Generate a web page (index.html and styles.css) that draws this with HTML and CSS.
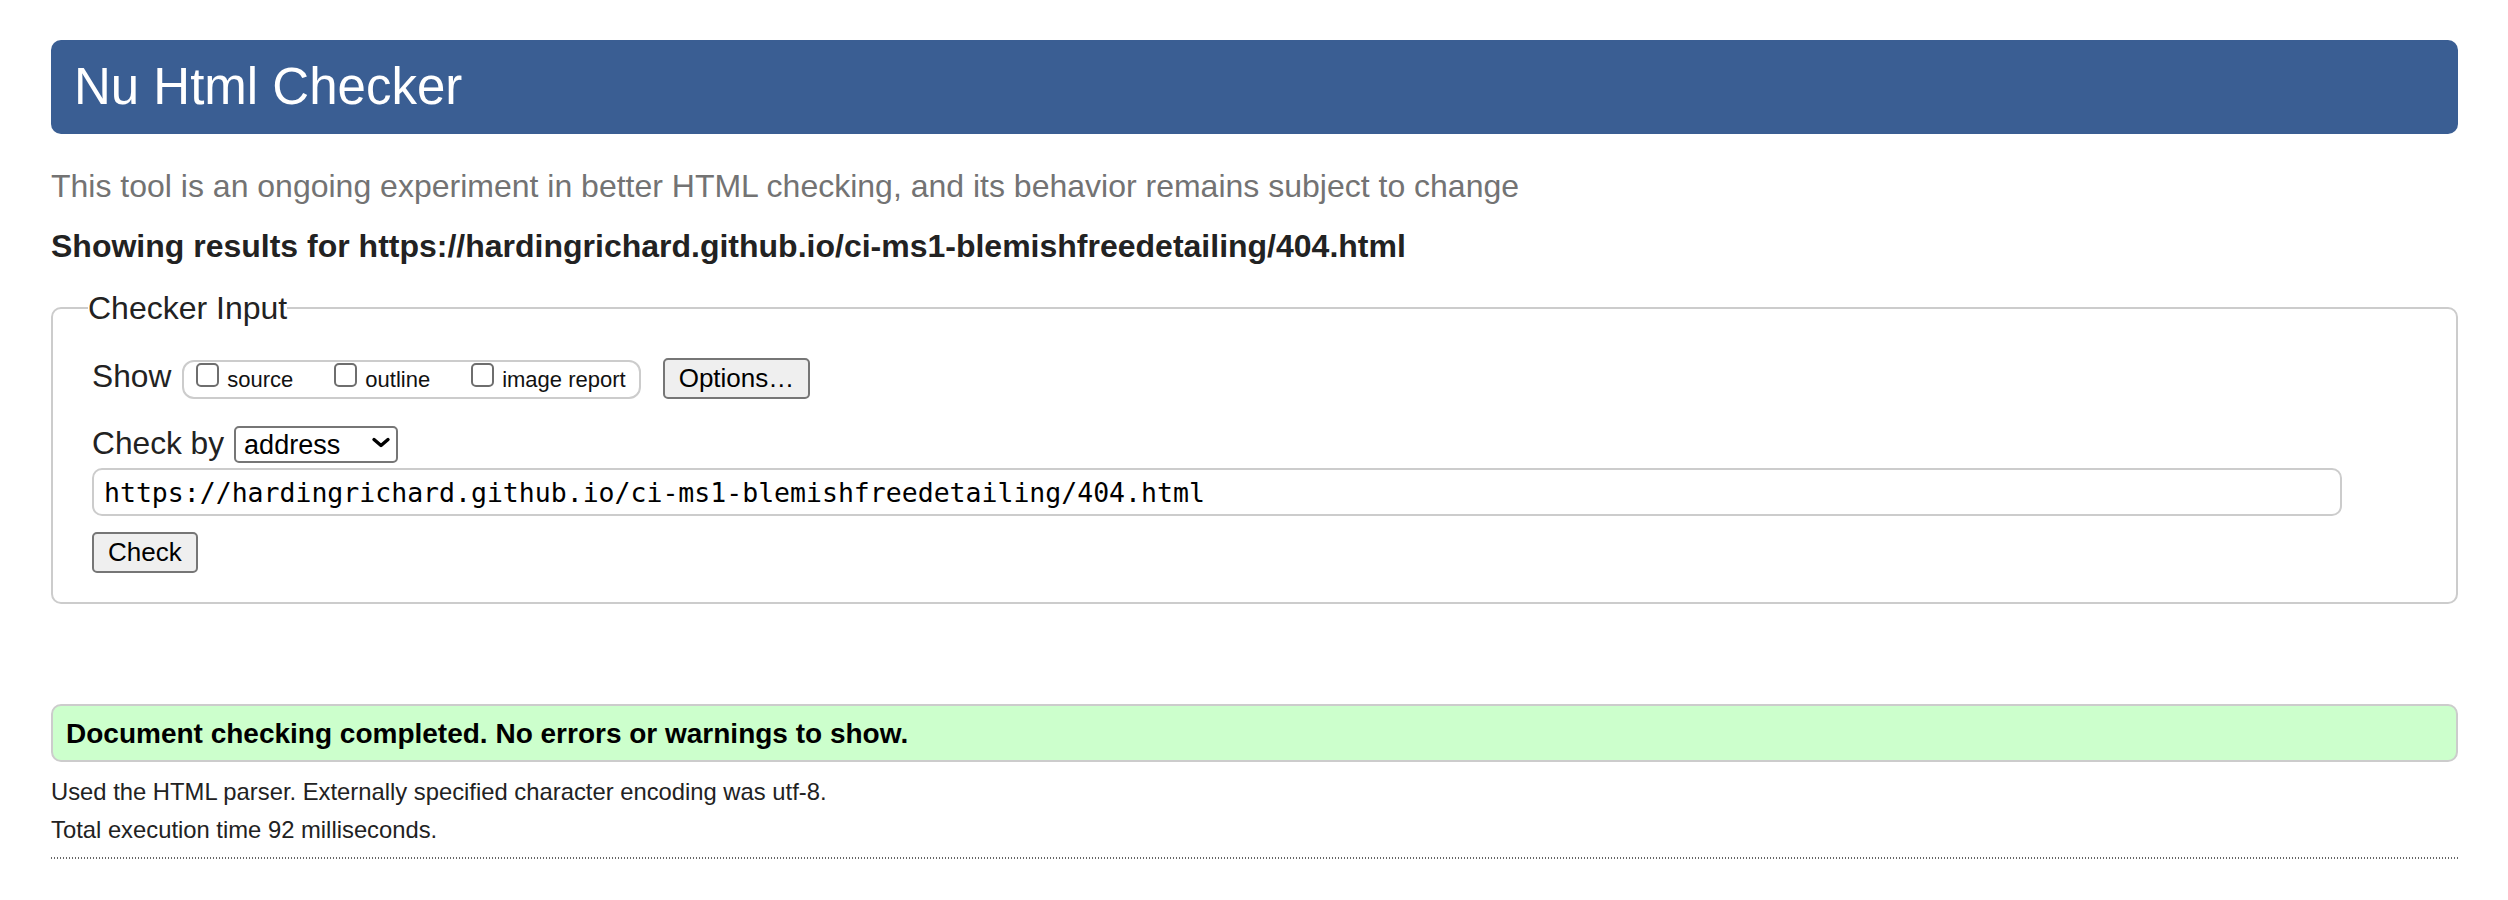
FILE: index.html
```html
<!DOCTYPE html>
<html lang="en">
<head>
<meta charset="utf-8">
<title>Nu Html Checker</title>
<link rel="stylesheet" href="styles.css">
</head>
<body>
<h1 class="masthead">Nu Html Checker</h1>
<p class="intro">This tool is an ongoing experiment in better HTML checking, and its behavior remains subject to change</p>
<p class="results-for">Showing results for https://hardingrichard.github.io/ci-ms1-blemishfreedetailing/404.html</p>
<form class="checker" onsubmit="return false">
<fieldset class="checker-input">
<legend class="legend">Checker Input</legend>
<div class="row row-show">
<span class="lbl">Show</span>
<span class="opts"><label class="opt"><input type="checkbox" class="cb"><span class="opt-text">source</span></label><label class="opt"><input type="checkbox" class="cb"><span class="opt-text">outline</span></label><label class="opt"><input type="checkbox" class="cb"><span class="opt-text">image report</span></label></span>
<button type="button" class="btn btn-options">Options…</button>
</div>
<div class="row row-by">
<span class="lbl">Check by</span>
<span class="select-wrap"><select class="sel"><option>address</option></select><svg class="chev" width="20" height="11" viewBox="0 0 20 11"><path d="M3 2.5 L10 8.5 L17 2.5" fill="none" stroke="#000" stroke-width="3.4" stroke-linecap="round" stroke-linejoin="round"/></svg></span>
</div>
<div class="row-url"><input class="url" type="text" value="https://hardingrichard.github.io/ci-ms1-blemishfreedetailing/404.html"></div>
<div class="row-submit"><button type="button" class="btn btn-check">Check</button></div>
</fieldset>
</form>
<div class="success"><p class="success-text">Document checking completed. No errors or warnings to show.</p></div>
<p class="details first">Used the HTML parser. Externally specified character encoding was utf-8.</p>
<p class="details">Total execution time 92 milliseconds.</p>
<div class="dotted"></div>
</body>
</html>
```
FILE: styles.css
```css
html, body {
  background: #fff;
}
body {
  margin: 0;
  padding: 40px 50px 0 51px;
  font-family: "Liberation Sans", Arial, Helvetica, sans-serif;
  color: #222;
}
.masthead {
  margin: 0;
  height: 94px;
  box-sizing: border-box;
  padding: 0 23px;
  background: #3a5e93;
  color: #fff;
  border-radius: 10px;
  font-size: 51px;
  font-weight: normal;
  line-height: 94px;
}
.intro {
  margin: 34.3px 0 0;
  font-size: 32px;
  line-height: 36px;
  color: #737373;
}
.results-for {
  margin: 24px 0 0;
  font-size: 32px;
  line-height: 36px;
  font-weight: bold;
  color: #222;
}
.checker {
  margin: 26px 0 0;
}
.checker-input {
  margin: 0;
  min-width: 0;
  border: 2px solid #ccc;
  border-radius: 10px;
  padding: 31.6px 40px 28.5px 39px;
}
.legend {
  padding: 0;
  margin-left: -4px;
  font-size: 32px;
  line-height: 36px;
  color: #222;
}
.row {
  display: flex;
  align-items: baseline;
}
.row-by {
  margin-top: 26px;
}
.lbl {
  font-size: 31.7px;
  line-height: 36px;
  color: #222;
}
.opts {
  display: inline-block;
  box-sizing: border-box;
  height: 39px;
  margin-left: 11px;
  padding: 0 13px 0 12px;
  border: 2px solid #ccc;
  border-radius: 12px;
  font-size: 22px;
  line-height: 35px;
  white-space: nowrap;
  color: #111;
}
.opt + .opt {
  margin-left: 41px;
}
.cb {
  -webkit-appearance: none;
  appearance: none;
  display: inline-block;
  vertical-align: baseline;
  box-sizing: border-box;
  width: 23px;
  height: 24px;
  margin: 0 8px 0 0;
  border: 2px solid #6e6e6e;
  border-radius: 5px;
  background: #fff;
}
.btn {
  box-sizing: border-box;
  height: 41px;
  padding: 0 14px;
  border: 2px solid #767676;
  border-radius: 5px;
  background: #efefef;
  color: #000;
  font-family: "Liberation Sans", Arial, Helvetica, sans-serif;
  font-size: 26px;
  line-height: 37px;
}
.btn-options {
  margin-left: 22px;
}
.select-wrap {
  position: relative;
  display: inline-flex;
  margin-left: 10px;
}
.sel {
  -webkit-appearance: none;
  appearance: none;
  box-sizing: border-box;
  width: 164px;
  height: 37px;
  margin: 0;
  padding: 0 0 0 8px;
  border: 2px solid #767676;
  border-radius: 5px;
  background: #fff;
  color: #000;
  font-family: "Liberation Sans", Arial, Helvetica, sans-serif;
  font-size: 27px;
}
.chev {
  position: absolute;
  right: 7px;
  top: 11px;
  pointer-events: none;
}
.row-url {
  margin-top: 5px;
}
.url {
  display: block;
  box-sizing: border-box;
  width: calc(100% - 74px);
  height: 48px;
  margin: 0;
  padding: 0 9px 0 10px;
  border: 2px solid #ccc;
  border-radius: 10px;
  background: #fff;
  color: #000;
  font-family: "DejaVu Sans Mono", "Liberation Mono", monospace;
  font-size: 26.5px;
  outline: none;
}
.row-submit {
  margin-top: 16px;
  display: flex;
}
.success {
  margin-top: 100px;
  box-sizing: border-box;
  border: 2px solid #ccc;
  border-radius: 10px;
  background: #ccffcc;
  padding: 1px 13px 0;
}
.success-text {
  margin: 0;
  font-size: 28px;
  line-height: 53.4px;
  font-weight: bold;
  color: #000;
}
.details {
  margin: 0;
  font-size: 23.8px;
  line-height: 37.6px;
  color: #222;
}
.details.first {
  margin-top: 11px;
}
.dotted {
  margin-top: 8.4px;
  height: 2px;
  background: repeating-linear-gradient(to right, #666 0, #666 1.5px, transparent 1.5px, transparent 3px);
}
```
